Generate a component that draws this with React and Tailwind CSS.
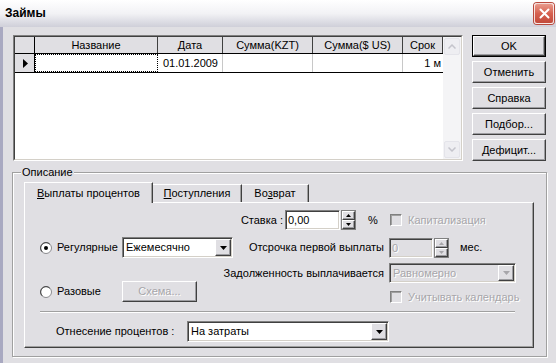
import React from 'react'

const raised = 'border border-t-white border-l-white border-r-[#404040] border-b-[#404040] shadow-[inset_-1px_-1px_0_#9d9da1]'
const sunken = 'border border-t-[#808080] border-l-[#808080] border-r-white border-b-white shadow-[inset_1px_1px_0_#404040,inset_-1px_-1px_0_#d4d0c8] p-[1px]'
const dimText = 'text-[#a7a6aa] [text-shadow:1px_1px_0_#fff]'

const COLS = [
  { key: 'ind', w: 20 },
  { key: 'name', label: 'Название', w: 123 },
  { key: 'date', label: 'Дата', w: 65 },
  { key: 'kzt', label: 'Сумма(KZT)', w: 90 },
  { key: 'usd', label: 'Сумма($ US)', w: 90 },
  { key: 'term', label: 'Срок', w: 40 },
]

function Tri({ up = false, fill = '#000', w = 7, h = 4 }) {
  const pts = up ? `0,${h} ${w},${h} ${w / 2},0` : `0,0 ${w},0 ${w / 2},${h}`
  return (
    <svg width={w} height={h} viewBox={`0 0 ${w} ${h}`}>
      <polygon points={pts} fill={fill} />
    </svg>
  )
}

function Select({ value, width, height = 21, disabled }) {
  return (
    <div className={`${sunken} flex ${disabled ? 'bg-[#e0dfe3]' : 'bg-white'}`} style={{ width, height }}>
      <span className={`flex-1 pl-[2px] leading-[17px] ${disabled ? dimText : ''}`}>{value}</span>
      <div className={`${raised} w-[16px] bg-[#e0dfe3] flex items-center justify-center`}>
        <Tri fill={disabled ? '#a7a6aa' : '#000'} />
      </div>
    </div>
  )
}

function Spin({ disabled }) {
  const fill = disabled ? '#a7a6aa' : '#000'
  return (
    <div className="w-[15px] h-[20px] flex flex-col border border-[#808080]">
      <div className={`${raised} flex-1 bg-[#e0dfe3] flex items-center justify-center`}>
        <Tri up w={5} h={3} fill={fill} />
      </div>
      <div className={`${raised} flex-1 bg-[#e0dfe3] flex items-center justify-center`}>
        <Tri w={5} h={3} fill={fill} />
      </div>
    </div>
  )
}

function Radio({ checked }) {
  return (
    <svg width="12" height="12" viewBox="0 0 12 12">
      <circle cx="6" cy="6" r="5.5" fill="#fff" stroke="#8a8a8e" />
      <path d="M2.2 9.8 A5 5 0 0 1 9.8 2.2" fill="none" stroke="#404040" />
      {checked && <circle cx="6" cy="6" r="2" fill="#000" />}
    </svg>
  )
}

function Check() {
  return (
    <div className="w-[12px] h-[12px] border border-t-[#808080] border-l-[#808080] border-r-white border-b-white bg-[#e0dfe3] shadow-[inset_1px_1px_0_#a0a0a0]" />
  )
}

function Arrow({ up }) {
  return (
    <div className="h-[17px] mx-[1px] rounded-[2px] border border-[#e4e4ea] bg-[#eeeef2] flex items-center justify-center">
      <svg width="8" height="5" viewBox="0 0 8 5">
        <path d={up ? 'M0.5 4.5 L4 1 L7.5 4.5' : 'M0.5 0.5 L4 4 L7.5 0.5'} fill="none" stroke="#c4c4cc" strokeWidth="1.5" />
      </svg>
    </div>
  )
}

function LoanGrid() {
  return (
    <div className="w-[450px] h-[126px] border border-t-[#808080] border-l-[#808080] border-r-white border-b-white">
      <div className="h-full flex border border-t-[#404040] border-l-[#404040] border-r-[#d4d0c8] border-b-[#d4d0c8] bg-white">
        <div className="w-[428px] flex flex-col">
          <div className="flex h-[17px] border-b border-black bg-[#e0dfe3]">
            {COLS.map(c => (
              <div
                key={c.key}
                className={`text-center leading-[16px] border-r ${c.key === 'ind' ? 'border-black' : 'border-[#404040]'}`}
                style={{ width: c.w }}
              >
                {c.label}
              </div>
            ))}
          </div>
          <div className="flex h-[19px] border-b border-black">
            <div className="w-[20px] bg-[#e0dfe3] border-r border-black flex items-center pl-[8px]">
              <svg width="5" height="9" viewBox="0 0 5 9"><polygon points="0,0 5,4.5 0,9" fill="#000" /></svg>
            </div>
            <div className="w-[123px] border border-dotted border-black" />
            <div className="w-[65px] border-r border-[#c8c8c8] text-right pr-[4px] leading-[18px]">01.01.2009</div>
            <div className="w-[90px] border-r border-[#c8c8c8]" />
            <div className="w-[90px] border-r border-[#c8c8c8]" />
            <div className="w-[40px] text-right pr-[2px] leading-[18px]">1 м</div>
          </div>
        </div>
        <div className="w-[18px] flex flex-col justify-between bg-[#f4f4f6] py-[1px]">
          <Arrow up />
          <Arrow />
        </div>
      </div>
    </div>
  )
}

function DlgButton({ children, isDefault }) {
  if (isDefault) {
    return (
      <div className="h-[22px] border border-black">
        <div className={`${raised} h-full bg-[#e0dfe3] flex items-center justify-center`}>{children}</div>
      </div>
    )
  }
  return <div className={`${raised} h-[22px] bg-[#e0dfe3] flex items-center justify-center`}>{children}</div>
}

function PaymentsTab() {
  return (
    <div className="w-[510px] h-[146px] border border-t-white border-l-white border-r-[#404040] border-b-[#404040] shadow-[inset_-1px_-1px_0_#a0a0a0] flex flex-col">
      <div className="mt-[7px] h-[20px] flex items-center">
        <span className="w-[258px] text-right">Ставка :</span>
        <div className={`${sunken} ml-[2px] w-[55px] h-[20px] bg-white pl-[2px] leading-[16px]`}>0,00</div>
        <div className="ml-[1px]"><Spin /></div>
        <span className="w-[34px] pl-[12px]">%</span>
        <Check />
        <span className={`ml-[6px] ${dimText}`}>Капитализация</span>
      </div>

      <div className="mt-[7px] flex items-start">
        <div className="w-[215px] pl-[15px] flex flex-col">
          <div className="h-[21px] flex items-center">
            <Radio checked />
            <span className="ml-[5px] w-[65px]">Регулярные</span>
            <Select value="Ежемесячно" width={111} />
          </div>
          <div className="mt-[23px] h-[21px] flex items-center">
            <Radio />
            <span className="ml-[5px] w-[65px]">Разовые</span>
            <div className={`${raised} w-[75px] h-[21px] bg-[#e0dfe3] flex items-center justify-center ${dimText}`}>Схема...</div>
          </div>
        </div>
        <div className="flex flex-col">
          <div className="h-[21px] flex items-center">
            <div className="w-[146px] pr-[2px] flex justify-end">
              <span className="whitespace-nowrap">Отсрочка первой выплаты</span>
            </div>
            <div className={`${sunken} ml-[3px] w-[44px] h-[20px] bg-[#e0dfe3] pl-[2px] leading-[16px] ${dimText}`}>0</div>
            <div className="ml-[1px]"><Spin disabled /></div>
            <span className="ml-[11px]">мес.</span>
          </div>
          <div className="mt-[5px] h-[20px] flex items-center">
            <div className="w-[146px] pr-[2px] flex justify-end">
              <span className="whitespace-nowrap shrink-0">Задолженность выплачивается</span>
            </div>
            <div className="ml-[3px]"><Select value="Равномерно" width={127} height={20} disabled /></div>
          </div>
          <div className="mt-[8px] h-[12px] flex items-center pl-[150px]">
            <Check />
            <span className={`ml-[6px] ${dimText}`}>Учитывать календарь</span>
          </div>
        </div>
      </div>

      <div className="mt-[8px] ml-[15px] w-[475px] h-[2px] border-t border-[#a0a0a0] border-b border-b-white" />

      <div className="mt-[8px] h-[21px] flex items-center">
        <span className="ml-[31px] w-[131px]">Отнесение процентов :</span>
        <Select value="На затраты" width={202} />
      </div>
    </div>
  )
}

export default function App() {
  return (
    <div className="w-[556px] h-[363px] overflow-hidden bg-[#e0dfe3] font-['Liberation_Sans',Arial,sans-serif] text-[11px] leading-[13px] text-black">
      <div className="h-[27px] flex items-center justify-between pl-[5px] pr-[2px] bg-gradient-to-b from-white via-[#f2f2f5] to-[#cfcfd9]">
        <span className="text-[12px] font-bold">Займы</span>
        <div className="w-[20px] h-[21px] rounded-[3px] border border-white/80 bg-gradient-to-b from-[#e89a8c] via-[#d6604f] to-[#c24a3b] flex items-center justify-center shadow-[0_0_0_1px_#b84a3e]">
          <svg width="11" height="11" viewBox="0 0 11 11">
            <path d="M1.5 1.5 L9.5 9.5 M9.5 1.5 L1.5 9.5" stroke="#fff" strokeWidth="2" strokeLinecap="round" />
          </svg>
        </div>
      </div>

      <div className="h-[336px] border-l-[3px] border-[#a9a9c1] flex flex-col">
        <div className="mt-[8px] flex">
          <div className="ml-[10px]"><LoanGrid /></div>
          <div className="ml-[9px] w-[74px] flex flex-col gap-[4px]">
            <DlgButton isDefault>OK</DlgButton>
            <DlgButton>Отменить</DlgButton>
            <DlgButton>Справка</DlgButton>
            <DlgButton>Подбор...</DlgButton>
            <DlgButton>Дефицит...</DlgButton>
          </div>
        </div>

        <div className="relative mt-[11px] ml-[9px] w-[535px] h-[185px] border border-[#a0a0a0] shadow-[inset_1px_1px_0_#fff,1px_1px_0_#fff] pt-[9px] pl-[11px]">
          <span className="absolute left-[8px] -top-[7px] px-[1px] bg-[#e0dfe3]">Описание</span>
          <div className="flex items-end h-[20px]">
            <div className="relative z-10 w-[129px] h-[21px] -mb-[1px] bg-[#e0dfe3] border-t border-l border-r border-t-white border-l-white border-r-[#404040] shadow-[inset_-1px_0_0_#a0a0a0] flex items-center justify-center">
              <span><span className="underline">В</span>ыплаты процентов</span>
            </div>
            <div className="w-[89px] h-[18px] border-t border-r border-t-white border-r-[#404040] shadow-[inset_-1px_0_0_#a0a0a0] flex items-center justify-center">
              <span><span className="underline">П</span>оступления</span>
            </div>
            <div className="w-[67px] h-[18px] border-t border-r border-t-white border-r-[#404040] shadow-[inset_-1px_0_0_#a0a0a0] flex items-center justify-center">
              <span>Во<span className="underline">з</span>врат</span>
            </div>
          </div>
          <PaymentsTab />
        </div>
      </div>
    </div>
  )
}
